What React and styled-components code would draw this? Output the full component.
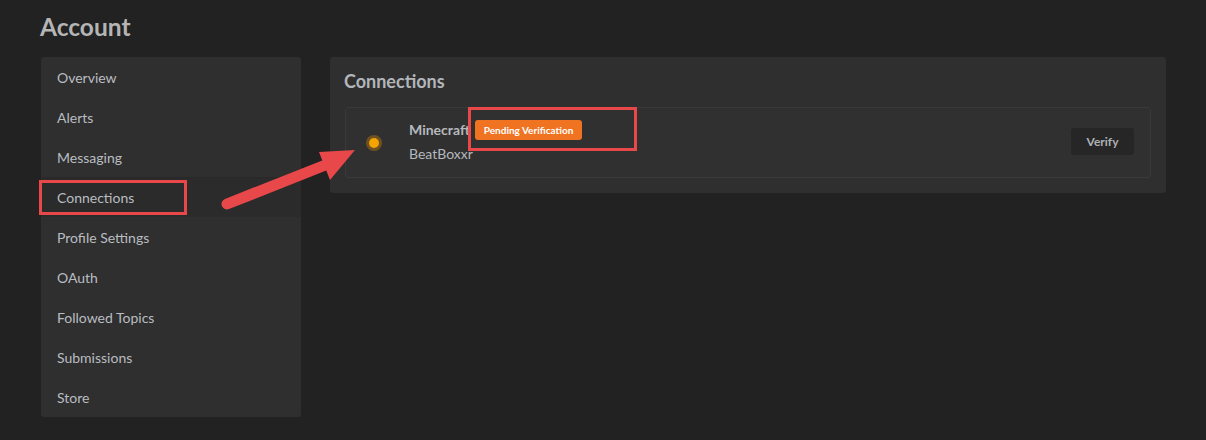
import styled, { createGlobalStyle } from "styled-components"

const GlobalStyle = createGlobalStyle`
    html, body {
        margin: 0;
        padding: 0;
        background: #222222;
    }
    body {
        font-family: Lato, "Liberation Sans", sans-serif;
        color: #b8bcc0;
    }
`

const Page = styled.div`
    position: relative;
    width: 1206px;
    height: 440px;
    box-sizing: border-box;
    padding: 11px 40px 0 41px;
`

const Title = styled.h1`
    margin: 0 0 0 -1px;
    font-size: 24.5px;
    font-weight: 700;
    color: #b5b5b5;
    line-height: 32px;
`

const Layout = styled.div`
    display: grid;
    grid-template-columns: 260px 836px;
    gap: 29px;
    margin-top: 14px;
    align-items: start;
`

const Sidebar = styled.nav`
    background: #2f2f2f;
    border-radius: 3px;
    display: flex;
    flex-direction: column;
`

const NavItem = styled.div`
    height: 40px;
    display: flex;
    align-items: center;
    padding-left: 16px;
    font-size: 14px;
    color: #b9bdc1;
    background: ${p => (p.$active ? "#2b2b2b" : "transparent")};
    border-top: 1px solid ${p => (p.$active ? "#282828" : "transparent")};
    box-sizing: border-box;
`

const Panel = styled.section`
    background: #2f2f2f;
    border-radius: 3px;
    padding: 12px 15px 15px 14px;
`

const PanelTitle = styled.h2`
    margin: 0 0 14px 0;
    font-size: 18px;
    font-weight: 700;
    color: #b2b6ba;
    line-height: 24px;
`

const ConnectionCard = styled.div`
    margin-left: 1px;
    height: 71px;
    box-sizing: border-box;
    border: 1px solid #393939;
    border-radius: 3px;
    background: #303030;
    display: flex;
    align-items: center;
    padding: 0 16px 0 20px;
`

const StatusDot = styled.span`
    width: 10px;
    height: 10px;
    border-radius: 50%;
    background: #f5a300;
    box-shadow: 0 0 0 3px rgba(160, 110, 20, 0.55);
    margin-left: 3px;
`

const Info = styled.div`
    display: flex;
    flex-direction: column;
    margin-left: 30px;
    gap: 5px;
    margin-top: -4px;
`

const NameRow = styled.div`
    display: flex;
    align-items: center;
    gap: 5px;
`

const Provider = styled.span`
    font-size: 14px;
    font-weight: 700;
    color: #b5b9bd;
`

const Badge = styled.span`
    background: #ef7321;
    color: #ffffff;
    font-size: 10px;
    font-weight: 700;
    border-radius: 3px;
    height: 20px;
    padding: 0 9px;
    display: inline-flex;
    align-items: center;
    margin-top: 1px;
`

const Username = styled.span`
    font-size: 14px;
    color: #b5b9bd;
`

const VerifyButton = styled.button`
    margin-left: auto;
    width: 63px;
    height: 27px;
    border: none;
    border-radius: 3px;
    background: #262626;
    color: #aeb2b6;
    font-family: Lato, "Liberation Sans", sans-serif;
    font-size: 12px;
    font-weight: 700;
    margin-top: -2px;
`

const Overlay = styled.svg`
    position: absolute;
    left: 0;
    top: 0;
    pointer-events: none;
`

const items = [
    "Overview",
    "Alerts",
    "Messaging",
    "Connections",
    "Profile Settings",
    "OAuth",
    "Followed Topics",
    "Submissions",
    "Store",
]

export default function App() {
    return (
        <>
            <GlobalStyle />
            <Page>
                <Title>Account</Title>
                <Layout>
                    <Sidebar>
                        {items.map(name => (
                            <NavItem key={name} $active={name == "Connections"}>{name}</NavItem>
                        ))}
                    </Sidebar>
                    <Panel>
                        <PanelTitle>Connections</PanelTitle>
                        <ConnectionCard>
                            <StatusDot />
                            <Info>
                                <NameRow>
                                    <Provider>Minecraft</Provider>
                                    <Badge>Pending Verification</Badge>
                                </NameRow>
                                <Username>BeatBoxxr</Username>
                            </Info>
                            <VerifyButton>Verify</VerifyButton>
                        </ConnectionCard>
                    </Panel>
                </Layout>

                {/* annotation marks drawn over the screenshot */}
                <Overlay width="1206" height="440" viewBox="0 0 1206 440">
                    <rect x="40.5" y="181.5" width="145" height="32" fill="none" stroke="#e8484a" strokeWidth="3" />
                    <rect x="469.5" y="108.5" width="166" height="41" fill="none" stroke="#e8484a" strokeWidth="3" />
                    <line x1="227" y1="204" x2="328" y2="164" stroke="#e8484a" strokeWidth="11" strokeLinecap="round" />
                    <polygon points="319,152 355,150 330,180" fill="#e8484a" />
                </Overlay>
            </Page>
        </>
    )
}
